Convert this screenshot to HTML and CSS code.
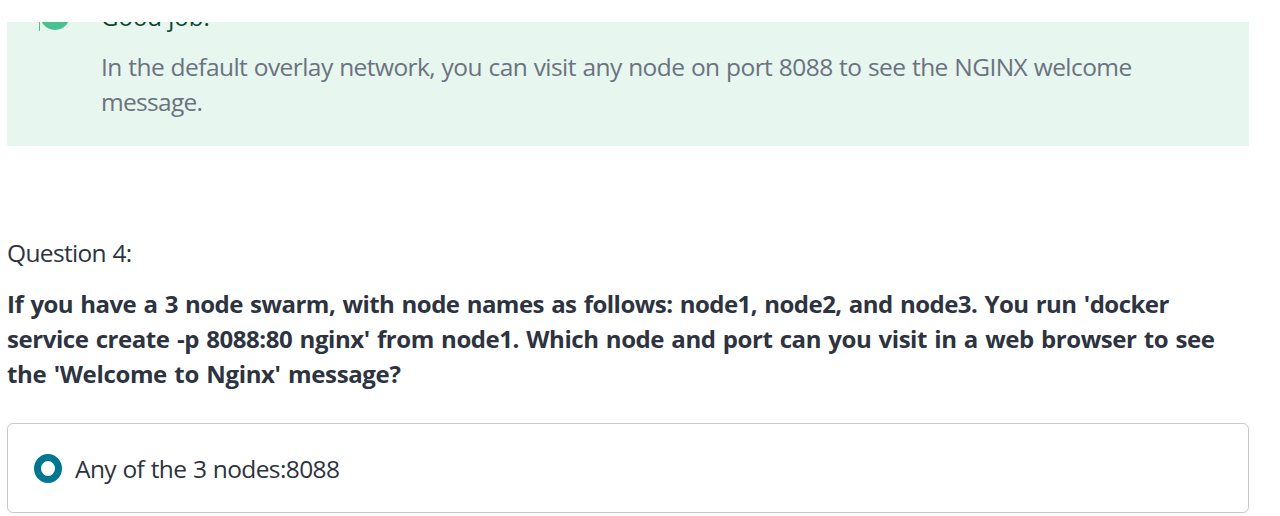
FILE: index.html
```html
<!DOCTYPE html>
<html lang="en">
<head>
<meta charset="utf-8">
<title>Quiz</title>
<link rel="stylesheet" href="styles.css">
</head>
<body>
<main class="quiz">
  <section class="feedback">
    <svg class="feedback-icon" width="32" height="32" viewBox="0 0 32 32"><path d="M.5 0V9" stroke="#46c28e"/><circle cx="16" cy="-7" r="15" fill="#46c28e"/></svg>
    <div class="feedback-body">
      <h2 class="feedback-title">Good job!</h2>
      <p class="feedback-text"><span class="f1">In the default overlay network, you can visit any node on port 8088 to see the NGINX welcome</span><br><span class="f2">message.</span></p>
    </div>
  </section>
  <p class="number">Question 4:</p>
  <h3 class="question"><span class="q1">If you have a 3 node swarm, with node names as follows: node1, node2, and node3. You run 'docker</span><br><span class="q2">service create -p 8088:80 nginx' from node1. Which node and port can you visit in a web browser to see</span><br><span class="q3">the 'Welcome to Nginx' message?</span></h3>
  <label class="option"><span class="radio"></span><span class="option-text">Any of the 3 nodes:8088</span></label>
</main>
</body>
</html>
```
FILE: styles.css
```css
* { box-sizing: border-box; }
body { margin: 0; background: #fff; color: #2d3340; font: 24.5px/35px "Open Sans", "Noto Sans", sans-serif; height: 516px; overflow: hidden; }
p, h2, h3 { margin: 0; white-space: nowrap; }
.quiz { width: 1242px; margin-left: 7px; padding-top: 22px; }
.feedback { display: flex; height: 124px; padding-left: 32px; background: #e7f6ef; overflow: hidden; }
.feedback-icon { flex: none; width: 32px; height: 32px; margin-right: 30px; }
.feedback-title { margin-top: -23px; color: #0b4632; font-size: 24px; font-weight: 400; line-height: 35px; }
.feedback-text { margin-top: 15px; color: #6b7280; }
.f1 { letter-spacing: -0.56px; word-spacing: 0.7px; }
.f2 { letter-spacing: -0.7px; }
.number { margin-top: 89px; letter-spacing: -0.65px; word-spacing: 0.7px; }
.question { margin-top: 16px; font-size: 24px; font-weight: 700; word-spacing: 1.5px; }
.q1 { letter-spacing: -0.53px; }
.q2 { letter-spacing: -0.44px; }
.q3 { letter-spacing: -0.35px; }
.option { display: flex; align-items: center; height: 90px; margin-top: 32px; padding-left: 26px; border: 1px solid #c9c9c9; border-radius: 6px; }
.radio { width: 28px; height: 29px; margin-right: 13px; border: 7.5px solid #007791; border-radius: 50%; }
.option-text { letter-spacing: -0.6px; word-spacing: 0.7px; }
```
